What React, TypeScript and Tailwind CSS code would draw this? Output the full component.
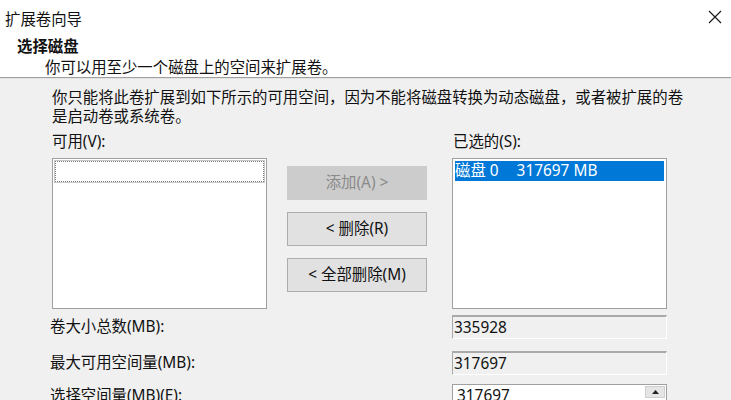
import React from "react";

const font = { fontFamily: '"Noto Sans", "Noto Sans CJK SC", sans-serif' };

function Btn({ children, disabled }: { children: React.ReactNode; disabled?: boolean }) {
  return (
    <div
      className={
        "h-[34px] w-[140px] flex items-center justify-center text-[15.4px] " +
        (disabled
          ? "bg-[#cccccc] text-[#8a8a8a] border border-[#cccccc]"
          : "bg-[#e1e1e1] text-[#111111] border border-[#adadad]")
      }
    >
      {children}
    </div>
  );
}

function Field({ value }: { value: string }) {
  return (
    <div className="h-[24px] w-[215px] bg-[#f0f0f0] border-t-2 border-l border-t-[#a9a9a9] border-l-[#a9a9a9] border-b border-r border-b-white border-r-white flex items-center pl-[1px] text-[15.4px] text-[#111111]">
      {value}
    </div>
  );
}

export default function App() {
  return (
    <div className="w-[731px] h-[400px] overflow-hidden bg-[#f0f0f0] text-[#111111]" style={font}>
      <div className="h-[78px] bg-white relative border-b border-b-[#a0a0a0]">
        <div className="pl-[5px] pt-[10px] text-[15.4px] leading-[20px]">扩展卷向导</div>
        <div className="pl-[17px] pt-[7px] text-[15.4px] leading-[20px] font-bold">选择磁盘</div>
        <div className="pl-[45px] pt-[1px] text-[15.4px] leading-[20px]">你可以用至少一个磁盘上的空间来扩展卷。</div>
        <svg className="absolute left-[708px] top-[10px]" width="14" height="14" viewBox="0 0 14 14">
          <path d="M1 1 L13 13 M13 1 L1 13" stroke="#1a1a1a" strokeWidth="1.2" fill="none" />
        </svg>
      </div>
      <div className="h-[1px] bg-[#e3e3e3]" />
      <div className="pl-[52px] pt-[9px] text-[15.4px] leading-[20px]">
        <p className="leading-[19px]">
          你只能将此卷扩展到如下所示的可用空间，因为不能将磁盘转换为动态磁盘，或者被扩展的卷
          <br />
          是启动卷或系统卷。
        </p>
        <div className="flex mt-[6px]">
          <div className="w-[215px]">
            <div className="h-[20px]">可用(V):</div>
            <div className="mt-[6px] h-[151px] bg-white border border-[#a0a0a0] p-[2px]">
              <div className="h-[21px] border border-dotted border-[#7a7a7a] outline outline-1 outline-[#c8c8c8]" />
            </div>
          </div>
          <div className="ml-[20px] pt-[34px] flex flex-col gap-[12px]">
            <Btn disabled>添加(A) &gt;</Btn>
            <Btn>&lt; 删除(R)</Btn>
            <Btn>&lt; 全部删除(M)</Btn>
          </div>
          <div className="ml-[25px] w-[215px]">
            <div className="h-[20px] pl-[1px]">已选的(S):</div>
            <div className="mt-[6px] h-[151px] bg-white border border-[#a0a0a0] p-[2px]">
              <div className="h-[20px] bg-[#0078d7] text-white flex items-center leading-[20px]">
                <span>磁盘 0</span>
                <span className="ml-[18px]">317697 MB</span>
              </div>
            </div>
          </div>
        </div>
        <div className="flex items-center mt-[6px]">
          <div className="w-[402px] -ml-[2px]">卷大小总数(MB):</div>
          <Field value="335928" />
        </div>
        <div className="flex items-center mt-[12px]">
          <div className="w-[402px] -ml-[2px]">最大可用空间量(MB):</div>
          <Field value="317697" />
        </div>
        <div className="flex items-center mt-[9px]">
          <div className="w-[402px] -ml-[2px]">选择空间量(MB)(E):</div>
          <div className="h-[24px] w-[215px] bg-white border border-[#a0a0a0] flex items-center relative">
            <span className="pl-[4px]">317697</span>
            <div className="absolute right-[1px] top-[1px] w-[20px] h-[12px] bg-[#e5e5e5] border border-[#cfcfcf] flex items-center justify-center">
              <svg width="7" height="4" viewBox="0 0 7 4"><path d="M0 4 L3.5 0 L7 4 Z" fill="#222" /></svg>
            </div>
          </div>
        </div>
      </div>
    </div>
  );
}
